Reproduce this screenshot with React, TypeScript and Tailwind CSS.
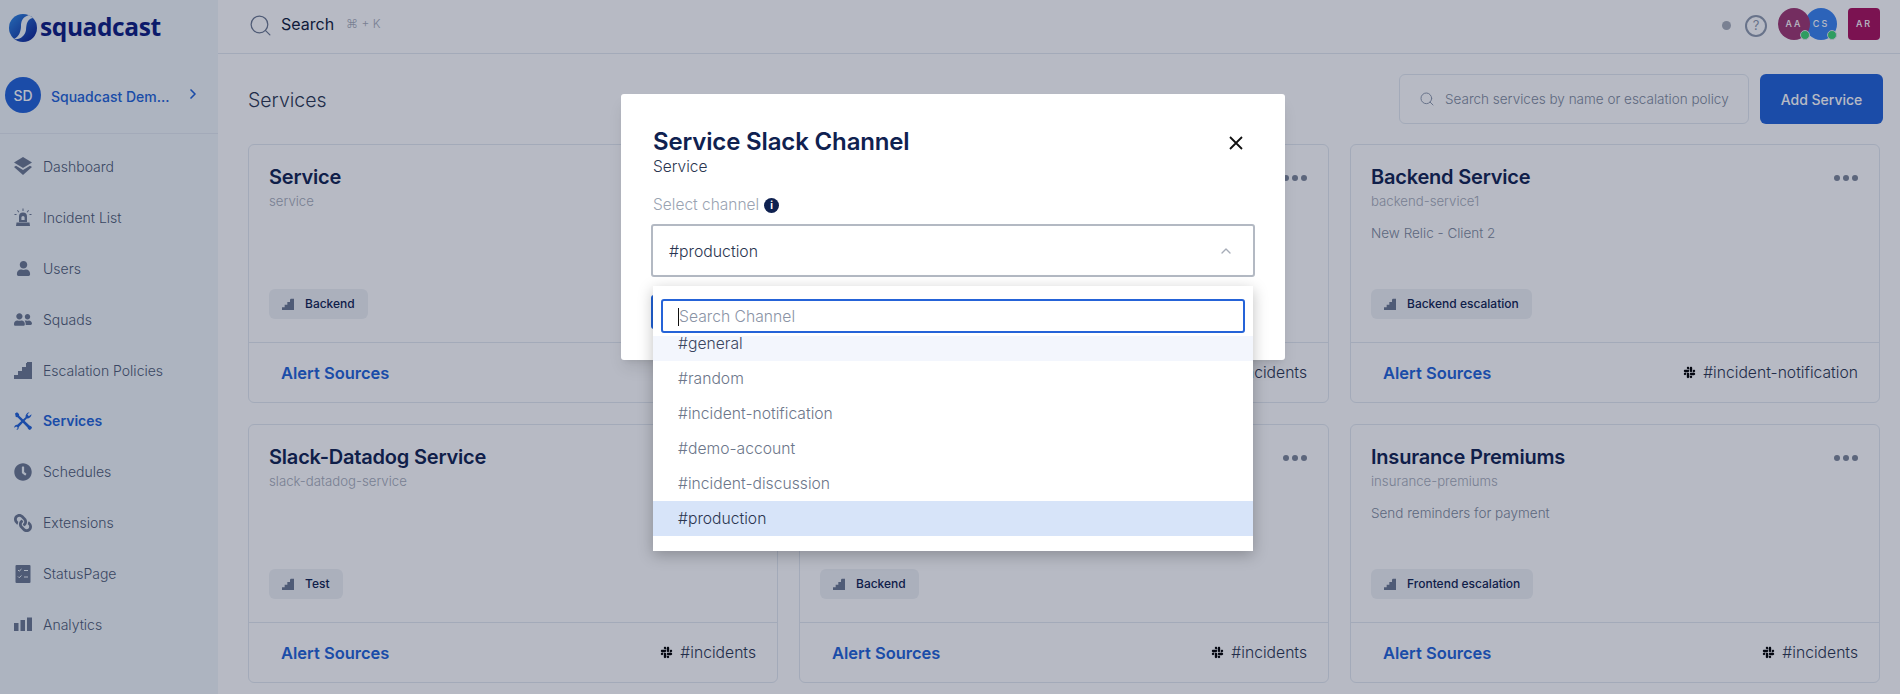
import React from "react";
import { FaSlack, FaUser, FaUserFriends, FaClock, FaLink } from "react-icons/fa";
import { FiSearch, FiChevronRight, FiChevronUp } from "react-icons/fi";

const Stairs = ({ className = "" }: { className?: string }) => (
  <svg viewBox="0 0 18 18" className={className} fill="currentColor">
    <path d="M0 18V14H4V10H8V6H12V2H13V1H18V18Z" />
  </svg>
);
const Siren = ({ className = "" }: { className?: string }) => (
  <svg viewBox="0 0 18 18" className={className} fill="currentColor">
    <path d="M5 14V8.500A4 4 0 0 1 13 8.500V14ZM9 8A1.600 1.600 0 0 0 7.400 9.600V12H10.600V9.600A1.600 1.600 0 0 0 9 8Z" fillRule="evenodd" />
    <path d="M2.500 14.500H15.500L16 18H2Z" />
    <path d="M8.500 0.500H9.500V3H8.500ZM3 2.500L3.800 1.900L5.300 3.900L4.500 4.500ZM15 2.500L14.200 1.900L12.700 3.900L13.500 4.500ZM0.500 6H2.500V7H0.500ZM15.500 6H17.500V7H15.500Z" />
  </svg>
);
const Layers = ({ className = "" }: { className?: string }) => (
  <svg viewBox="0 0 18 18" className={className} fill="currentColor">
    <path d="M9 0L18 5.500L9 11L0 5.500Z" />
    <path d="M0 10L2 8.800L9 13L16 8.800L18 10L9 18Z" />
  </svg>
);
const Tools = ({ className = "" }: { className?: string }) => (
  <svg viewBox="0 0 18 18" className={className} fill="currentColor">
    <path d="M1 1.500L3 0.300L5 2L5.200 3.700L15.500 13.500C17 13.800 18 15 18 16L16 18C15 18 13.800 17 13.500 15.500L3.500 5.200L1.800 5Z" />
    <path d="M11.500 5.200C11.300 3 12.800 0.500 15.500 0.200L13.400 2.600L14.800 4.200L17.500 2.300C17.500 5 15 6.800 12.800 6.500L4.800 15C5 17 3.500 18 2.400 18L3.800 15.800L2.400 14.400L0.200 15.800C0 14 1.500 12.500 3.300 12.700Z" />
  </svg>
);
const Checklist = ({ className = "" }: { className?: string }) => (
  <svg viewBox="0 0 18 18" className={className}>
    <rect x="1.500" y="0" width="15" height="18" rx="1" fill="currentColor" />
    <path d="M4 5l1.200 1.200L7.500 4M4 11.500l1.200 1.200L7.500 10.500" fill="none" stroke="#f1f6f9" strokeWidth="1" />
    <path d="M10 5.500h4M10 12h4" stroke="#f1f6f9" strokeWidth="1.200" />
  </svg>
);
const Bars = ({ className = "" }: { className?: string }) => (
  <svg viewBox="0 0 18 18" className={className} fill="currentColor">
    <rect x="0" y="8" width="4.500" height="8" />
    <rect x="6.500" y="5" width="4.500" height="11" />
    <rect x="13" y="2.500" width="5" height="13.500" />
  </svg>
);
const Logo = () => (
  <svg viewBox="0 0 28 28" className="w-[28px] h-[28px]">
    <defs>
      <linearGradient id="lg" x1="0" y1="0" x2="1" y2="1">
        <stop offset="0" stopColor="#2f8be8" />
        <stop offset="1" stopColor="#0a1a8c" />
      </linearGradient>
    </defs>
    <circle cx="14" cy="14" r="14" fill="url(#lg)" />
    <path d="M20 1C13 3 12 8 12 12C12 17 10 23 5 25C11 26 16 22 17 16C17.500 10 18 5 24 4Z" fill="#f1f6f9" />
  </svg>
);

const nav = [
  { label: "Dashboard", icon: <Layers className="w-[18px] h-[18px]" /> },
  { label: "Incident List", icon: <Siren className="w-[18px] h-[18px]" /> },
  { label: "Users", icon: <FaUser className="w-[15px] h-[15px]" /> },
  { label: "Squads", icon: <FaUserFriends className="w-[19px] h-[19px]" /> },
  { label: "Escalation Policies", icon: <Stairs className="w-[18px] h-[18px]" /> },
  { label: "Services", icon: <Tools className="w-[18px] h-[18px]" />, active: true },
  { label: "Schedules", icon: <FaClock className="w-[18px] h-[18px]" /> },
  { label: "Extensions", icon: <FaLink className="w-[18px] h-[18px] -scale-x-100" /> },
  { label: "StatusPage", icon: <Checklist className="w-[18px] h-[18px]" /> },
  { label: "Analytics", icon: <Bars className="w-[18px] h-[18px]" /> },
];

type Card = { title?: string; slug?: string; desc?: string; tag?: string; channel?: string };
const cards: Card[] = [
  { title: "Service", slug: "service", tag: "Backend" },
  { channel: "#incidents" },
  { title: "Backend Service", slug: "backend-service1", desc: "New Relic - Client 2", tag: "Backend escalation", channel: "#incident-notification" },
  { title: "Slack-Datadog Service", slug: "slack-datadog-service", tag: "Test", channel: "#incidents" },
  { tag: "Backend", channel: "#incidents" },
  { title: "Insurance Premiums", slug: "insurance-premiums", desc: "Send reminders for payment", tag: "Frontend escalation", channel: "#incidents" },
];

const ServiceCard = ({ c }: { c: Card }) => (
  <div className="h-[259px] flex flex-col rounded-md border border-[#e3e9f0]">
    <div className="flex-1 flex flex-col pl-[20px] pr-[21px] pt-[20px] pb-[23px] relative">
      <div className="flex justify-end absolute right-[21px] top-[30px] gap-[3px]">
        <span className="w-[6px] h-[6px] rounded-full bg-[#7d8799]" />
        <span className="w-[6px] h-[6px] rounded-full bg-[#7d8799]" />
        <span className="w-[6px] h-[6px] rounded-full bg-[#7d8799]" />
      </div>
      <div className="h-[24px] text-[20px] leading-[24px] font-semibold tracking-[-0.2px] text-[#0f2150]">{c.title}</div>
      <div className="h-[20px] mt-[3px] text-[13.200px] leading-[18px] font-light text-[#a6acb8]">{c.slug}</div>
      <div className="mt-[12px] text-[13.500px] leading-[18px] font-light text-[#808a9c]">{c.desc}</div>
      <div className="flex-1" />
      {c.tag && (
        <div className="self-start h-[30px] flex items-center rounded-md bg-[#eef1f4] pl-[13px] pr-[13px] gap-[11px]">
          <Stairs className="w-[12px] h-[12px] text-[#6b7890]" />
          <span className="text-[12px] font-medium text-[#0f2150]">{c.tag}</span>
        </div>
      )}
    </div>
    <div className="h-[60px] border-t border-[#e3e9f0] flex items-center justify-between pl-[32px] pr-[21px] pt-[1px]">
      <span className="text-[16.500px] font-semibold text-[#2062d7]">Alert Sources</span>
      {c.channel && (
        <span className="flex items-center gap-[7px] text-[15.700px] font-light text-[#2a3550]">
          <FaSlack className="w-[13px] h-[13px] text-[#000]" />
          {c.channel}
        </span>
      )}
    </div>
  </div>
);

export default function App() {
  return (
    <div className="relative flex h-[694px] overflow-hidden bg-white font-['Inter',sans-serif]">
      <aside className="w-[218px] shrink-0 bg-[#f1f6f9] flex flex-col">
        <div className="h-[77px] pl-[9px] pt-[14px] flex items-start gap-[3px]">
          <Logo />
          <span className="font-['Open_Sans',sans-serif] text-[24.500px] leading-[25px] font-bold text-[#0b1a80] tracking-[-0.4px]">squadcast</span>
        </div>
        <div className="h-[57px] pl-[5px] pr-[17px] flex items-start gap-[10px] border-b border-[#e3e9f0]">
          <div className="w-[36px] h-[36px] rounded-full bg-[#2062d7] flex items-center justify-center text-white text-[14px] font-medium">SD</div>
          <span className="flex-1 mt-[9px] text-[14px] font-medium text-[#2062d7] truncate">Squadcast Dem...</span>
          <FiChevronRight className="mt-[9px] w-[16px] h-[16px] text-[#2062d7]" strokeWidth={2.500} />
        </div>
        <nav className="pt-[7px] flex flex-col">
          {nav.map((n) => (
            <div key={n.label} className={`h-[50.900px] flex items-center ${n.active ? "text-[#2062d7]" : "text-[#6b7890]"}`}>
              <span className="w-[18px] h-[18px] ml-[14px] flex items-center justify-center">{n.icon}</span>
              <span className={`ml-[11px] text-[14px] ${n.active ? "font-semibold" : "font-light text-[#4d5a73]"}`}>{n.label}</span>
            </div>
          ))}
        </nav>
      </aside>
      <main className="flex-1 flex flex-col min-w-0">
        <header className="isolate h-[54px] shrink-0 border-b border-[#e3e9f0] flex items-center pl-[30px] pr-[20px]">
          <FiSearch className="w-[25px] h-[25px] text-[#6b7890] -mt-[2px]" strokeWidth={1.200} />
          <span className="ml-[8px] text-[16px] font-normal text-[#0f1a3a] -mt-[5px]">Search</span>
          <span className="ml-[12px] text-[12px] font-light text-[#a6acb8] -mt-[5px]">⌘ + K</span>
          <div className="flex-1" />
          <span className="w-[9px] h-[9px] rounded-full bg-[#a8aeb9] -mt-[2px]" />
          <span className="ml-[14.500px] w-[22px] h-[22px] rounded-full border-2 border-[#8f9aad] flex items-center justify-center text-[13px] font-normal text-[#8f9aad] -mt-[2px]">?</span>
          <div className="ml-[11px] flex -mt-[5px]">
            <div className="relative z-10 w-[32px] h-[32px] rounded-full bg-[#9f3670] flex items-center justify-center text-[9px] font-medium tracking-[2px] text-white">
              AA
              <span className="absolute right-[0px] bottom-[0px] w-[10px] h-[10px] rounded-full bg-[#3bd670] border border-[#dfe3e8]" />
            </div>
            <div className="relative -ml-[5px] w-[32px] h-[32px] rounded-full bg-[#3983f0] flex items-center justify-center text-[9px] font-medium tracking-[2px] text-white">
              CS
              <span className="absolute right-[0px] bottom-[0px] w-[10px] h-[10px] rounded-full bg-[#3bd670] border border-[#dfe3e8]" />
            </div>
          </div>
          <div className="ml-[11px] -mt-[5px] w-[32px] h-[32px] rounded-sm bg-[#a90f5b] flex items-center justify-center text-[9px] font-medium tracking-[2px] text-white">AR</div>
        </header>
        <div className="pl-[30px] pr-[17px]">
          <div className="h-[90px] flex items-start">
            <span className="mt-[34px] text-[19.500px] leading-[24px] font-light text-[#2a3550]">Services</span>
            <div className="flex-1" />
            <div className="mt-[20px] w-[350px] h-[50px] rounded-md border border-[#e3e9f0] flex items-center pl-[19px] gap-[10px]">
              <FiSearch className="w-[16px] h-[16px] text-[#8f9aad]" strokeWidth={1.500} />
              <span className="text-[13.500px] font-light text-[#808a9c]">Search services by name or escalation policy</span>
            </div>
            <div className="mt-[20px] ml-[11px] w-[123px] h-[50px] rounded-md bg-[#2062d7] flex items-center justify-center text-[14px] font-medium text-white">Add Service</div>
          </div>
          <div className="grid grid-cols-3 gap-x-[21px] gap-y-[21px] w-[1632px]">
            {cards.map((c, i) => (
              <ServiceCard key={i} c={c} />
            ))}
          </div>
        </div>
      </main>

      <div className="absolute inset-0 bg-[#121c3a]/30" />

      <div className="absolute left-[621px] top-[94px] w-[664px] h-[266px] bg-white rounded-[3px] shadow-lg pl-[32px] pr-[32px] pt-[33px]">
        <div className="text-[24px] leading-[30px] font-semibold tracking-[-0.15px] text-[#0f2150]">Service Slack Channel</div>
        <div className="text-[15.500px] leading-[20px] font-light text-[#2a3550]">Service</div>
        <div className="mt-[18px] flex items-center gap-[5px] h-[20px]">
          <span className="text-[15.500px] font-light text-[#9aa3b2]">Select channel</span>
          <span className="w-[15px] h-[15px] rounded-full bg-[#0f2150] flex items-center justify-center text-[10px] font-bold text-white">i</span>
        </div>
        <div className="mt-[9px] -ml-[2px] w-[604px] h-[53px] rounded-[3px] border-2 border-[#b3b9c3] flex items-center justify-between pl-[16px] pr-[19px] pt-[2px]">
          <span className="text-[15.800px] font-light text-[#2a3550]">#production</span>
          <FiChevronUp className="w-[16px] h-[16px] text-[#a6acb8] -mt-[2px]" strokeWidth={2} />
        </div>
        <div className="absolute left-[30px] top-[201px] w-[40px] h-[34px] rounded-[3px] bg-[#2062d7]" />

        <svg viewBox="0 0 14 14" className="absolute right-[42px] top-[42px] w-[14px] h-[14px]" fill="none" stroke="#111" strokeWidth="1.800">
          <path d="M1 1L13 13M13 1L1 13" />
        </svg>

        <div className="absolute left-[32px] top-[192px] w-[600px] h-[265px] bg-white shadow-[0_4px_14px_rgba(0,0,0,0.25)] flex flex-col">
          <div className="h-[50px] shrink-0 px-[8px] pt-[13px] bg-white">
            <div className="h-[34px] rounded-[3px] border-2 border-[#2563d8] flex items-center pl-[15px] pt-[1px]">
              <span className="w-px h-[18px] bg-[#111]" />
              <span className="text-[15.700px] font-light text-[#8a93a5]">Search Channel</span>
            </div>
          </div>
          <div className="h-[25px] shrink-0 bg-[#f3f6fd] flex items-start pl-[25px]">
            <span className="text-[15.700px] leading-[15px] font-light text-[#3a4560]">#general</span>
          </div>
          {["#random", "#incident-notification", "#demo-account", "#incident-discussion"].map((o) => (
            <div key={o} className="h-[35px] shrink-0 flex items-center pl-[25px] text-[15.700px] font-light text-[#6c768a]">{o}</div>
          ))}
          <div className="h-[35px] shrink-0 flex items-center pl-[25px] bg-[#d7e4f9] text-[15.700px] font-light text-[#2a3550]">#production</div>
        </div>
      </div>
    </div>
  );
}
